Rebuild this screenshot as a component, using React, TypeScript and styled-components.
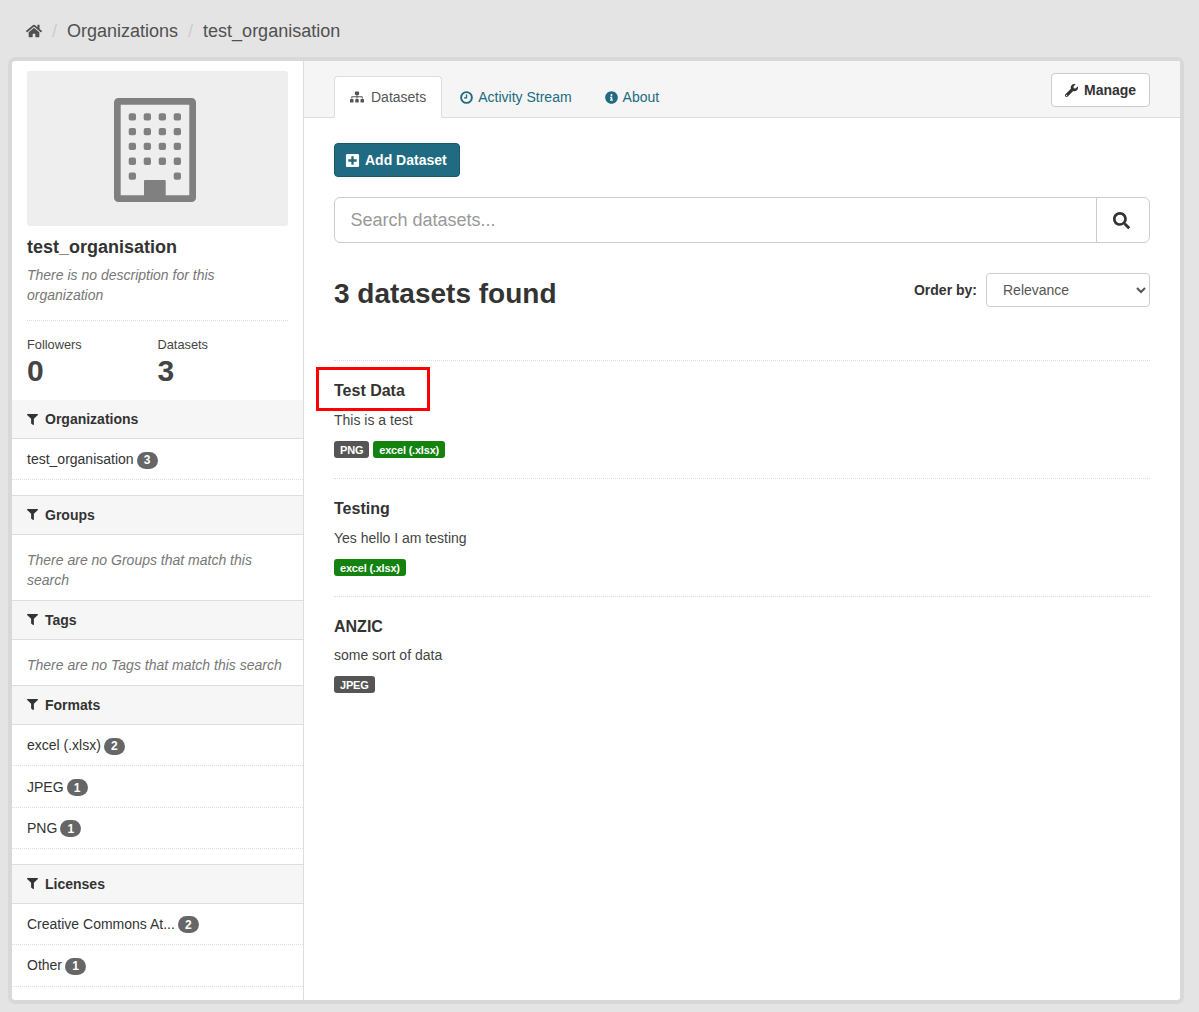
import React from 'react';
import {
  FaFilter,
  FaHome,
  FaInfoCircle,
  FaPlusSquare,
  FaSearch,
  FaSitemap,
  FaWrench,
} from 'react-icons/fa';
import styled, { createGlobalStyle } from 'styled-components';

const GlobalStyle = createGlobalStyle`
  html, body {
    margin: 0;
    padding: 0;
  }

  body {
    background: #e4e4e4;
    color: #444;
    font-family: "Liberation Sans", Arial, sans-serif;
    font-size: 14px;
    line-height: 20px;
  }

  * {
    box-sizing: border-box;
  }
`;

const Page = styled.div`
  width: 1199px;
  height: 1012px;
  padding: 0 19px 0 12px;
  overflow: hidden;
`;

const Breadcrumb = styled.nav`
  display: flex;
  align-items: center;
  height: 61px;
  padding: 0 0 0 14px;
  font-size: 18px;
  color: #505050;
`;

const HomeIcon = styled(FaHome)`
  width: 16px;
  height: 16px;
  color: #505050;
`;

const Slash = styled.span`
  color: #ccc;
  margin: 0 10px;
`;

const Wrapper = styled.div`
  display: flex;
  height: 939px;
  background: #fff;
  border-radius: 3px;
  box-shadow: 0 0 0 4px rgba(0, 0, 0, 0.05);
`;

const Sidebar = styled.aside`
  flex: 0 0 292px;
  border-right: 1px solid #ddd;
`;

const OrgInfo = styled.div`
  padding: 10px 15px 0;
`;

const OrgImage = styled.div`
  display: flex;
  align-items: center;
  justify-content: center;
  height: 155px;
  padding: 2px 5px 0 0;
  background: #eee;
  border-radius: 3px;
`;

const OrgName = styled.h1`
  margin: 10px 0 0;
  font-size: 18px;
  line-height: 22px;
  font-weight: bold;
  color: #333;
`;

const OrgDescription = styled.p`
  margin: 7px 0 0;
  height: 56px;
  font-style: italic;
  color: #777;
  border-bottom: 1px dotted #ddd;
`;

const Stats = styled.div`
  display: flex;
  height: 79px;
  padding-top: 15px;
`;

const Stat = styled.div`
  flex: 0 0 130.5px;
`;

const StatLabel = styled.div`
  font-size: 12.8px;
  line-height: 17px;
  color: #444;
`;

const StatValue = styled.div`
  font-size: 30px;
  line-height: 36px;
  font-weight: bold;
  color: #444;
`;

const FilterHeading = styled.h2<{ $topBorder?: boolean }>`
  display: flex;
  align-items: center;
  gap: 7px;
  margin: 0;
  height: ${(p) => (p.$topBorder ? 40 : 39)}px;
  padding: 0 15px;
  background: #f6f6f6;
  font-size: 14px;
  font-weight: bold;
  color: #333;
  border-bottom: 1px solid #ddd;
  border-top: ${(p) => (p.$topBorder ? '1px solid #ddd' : 'none')};
`;

const FilterIcon = styled(FaFilter)`
  width: 11px;
  height: 11px;
  color: #333;
`;

const FilterList = styled.ul`
  list-style: none;
  margin: 0 0 14.6px;
  padding: 0;
`;

const FilterItem = styled.li`
  display: flex;
  align-items: center;
  height: 41.4px;
  padding: 0 15px;
  border-bottom: 1px dotted #ddd;
  color: #333;
`;

const Count = styled.span`
  display: inline-flex;
  align-items: center;
  justify-content: center;
  width: 21px;
  height: 17px;
  margin: 2px 0 0 3px;
  border-radius: 9px;
  background: #666;
  color: #fff;
  font-size: 12px;
  font-weight: bold;
`;

const Empty = styled.p`
  margin: 0;
  padding: 15px 15px 10px;
  font-style: italic;
  color: #777;
`;

const Main = styled.main`
  flex: 1;
`;

const TabBar = styled.div`
  display: flex;
  justify-content: space-between;
  height: 57px;
  padding: 12px 30px 0 30px;
  background: #f5f5f5;
  border-bottom: 1px solid #ddd;
`;

const Tabs = styled.div`
  display: flex;
  align-items: flex-end;
  gap: 2px;
  height: 44px;
`;

const Tab = styled.a<{ $active?: boolean }>`
  display: flex;
  align-items: center;
  gap: ${(p) => (p.$active ? 7 : 5)}px;
  height: 42px;
  margin-bottom: -1px;
  padding: 0 ${(p) => (p.$active ? 15 : 14)}px 0 15px;
  border: 1px solid ${(p) => (p.$active ? '#ddd' : 'transparent')};
  border-bottom-color: ${(p) => (p.$active ? '#fff' : 'transparent')};
  border-radius: 4px 4px 0 0;
  background: ${(p) => (p.$active ? '#fff' : 'transparent')};
  color: ${(p) => (p.$active ? '#555' : '#206b82')};
`;

const InfoIcon = styled(FaInfoCircle)`
  width: 13px;
  height: 13px;
`;

const ManageButton = styled.button`
  display: flex;
  align-items: center;
  gap: 6px;
  width: 99px;
  height: 34px;
  padding: 0 0 0 13px;
  border: 1px solid #ccc;
  border-radius: 4px;
  background: #fff;
  color: #333;
  font: bold 14px "Liberation Sans", Arial, sans-serif;
`;

const Content = styled.div`
  padding: 25px 30px 0;
`;

const AddButton = styled.button`
  display: flex;
  align-items: center;
  gap: 5px;
  width: 126px;
  height: 34px;
  padding: 0 0 0 10px;
  border: 1px solid #1a5568;
  border-radius: 4px;
  background: #206b82;
  color: #fff;
  font: bold 14px "Liberation Sans", Arial, sans-serif;
`;

const SearchGroup = styled.div`
  display: flex;
  height: 46px;
  margin-top: 20px;
  border: 1px solid #ccc;
  border-radius: 6px;
`;

const SearchInput = styled.input`
  flex: 1;
  min-width: 0;
  padding: 0 16px 0 15.5px;
  border: 0;
  outline: 0;
  background: transparent;
  font: 18px "Liberation Sans", Arial, sans-serif;
  color: #555;

  &::placeholder {
    color: #999;
    opacity: 1;
  }
`;

const SearchButton = styled.button`
  display: flex;
  align-items: center;
  justify-content: center;
  flex: 0 0 53px;
  padding: 0 4px 0 0;
  border: 0;
  border-left: 1px solid #ccc;
  background: transparent;
  color: #333;
`;

const ResultHead = styled.div`
  display: flex;
  justify-content: space-between;
  align-items: flex-start;
  height: 118px;
  padding-top: 30px;
  border-bottom: 1px dotted #ddd;
`;

const ResultCount = styled.h2`
  margin: 1px 0 0;
  font-size: 28px;
  line-height: 40px;
  font-weight: bold;
  color: #333;
`;

const OrderBy = styled.div`
  display: flex;
  align-items: center;
  gap: 9px;
  font-weight: bold;
  color: #333;
`;

const OrderSelect = styled.select`
  width: 164px;
  height: 34px;
  padding: 0 12px;
  border: 1px solid #ccc;
  border-radius: 4px;
  background: #fff;
  color: #555;
  font: 14px "Liberation Sans", Arial, sans-serif;
`;

const Dataset = styled.article<{ $last?: boolean }>`
  position: relative;
  height: 118px;
  padding-top: 19px;
  border-bottom: ${(p) => (p.$last ? 'none' : '1px dotted #ddd')};
`;

const DatasetTitle = styled.h3`
  margin: 0;
  height: 21px;
  font-size: 16px;
  line-height: 21px;
  font-weight: bold;
  color: #333;
`;

const DatasetNotes = styled.p<{ $gap: number }>`
  margin: ${(p) => p.$gap}px 0 0;
  color: #444;
`;

const Labels = styled.div`
  display: flex;
  gap: 4px;
  margin-top: 11px;
`;

const FormatLabel = styled.span<{ $color: string }>`
  display: flex;
  align-items: center;
  height: 17px;
  padding: 0 6px;
  border-radius: 3px;
  background: ${(p) => p.$color};
  color: #fff;
  font-size: 11px;
  font-weight: bold;
  letter-spacing: -0.2px;
`;

const Highlight = styled.div`
  position: absolute;
  top: 6px;
  left: -18px;
  width: 114px;
  height: 44px;
  border: 3px solid #f00;
  pointer-events: none;
`;

const BuildingIcon = () => (
  <svg width="82" height="104" viewBox="0 0 82 104">
    <rect x="3.35" y="3.35" width="75.3" height="97.3" rx="1" fill="none" stroke="#808080" strokeWidth="6.7" />
    {[0, 1, 2, 3].map((row) =>
      [0, 1, 2, 3].map((col) => (
        <rect key={`${row}-${col}`} x={14.7 + col * 15} y={15.2 + row * 14.8} width="7.3" height="7.3" rx="2" fill="#808080" />
      ))
    )}
    <rect x="14.7" y="74.4" width="7.3" height="7.3" rx="2" fill="#808080" />
    <rect x="59.7" y="74.4" width="7.3" height="7.3" rx="2" fill="#808080" />
    <rect x="30" y="82" width="21.7" height="20" rx="1" fill="#808080" />
  </svg>
);

const ClockIcon = () => (
  <svg width="13" height="13" viewBox="0 0 13 13">
    <circle cx="6.5" cy="6.5" r="5.4" fill="none" stroke="currentColor" strokeWidth="1.9" />
    <path d="M6.5 3.4V6.9H4" fill="none" stroke="currentColor" strokeWidth="1.3" />
  </svg>
);

const Facet: React.FC<{ title: string; top?: boolean; items: [string, number][] }> = ({ title, top, items }) => (
  <>
    <FilterHeading $topBorder={top}>
      <FilterIcon />
      {title}
    </FilterHeading>
    <FilterList>
      {items.map(([name, count]) => (
        <FilterItem key={name}>
          {name}
          <Count>{count}</Count>
        </FilterItem>
      ))}
    </FilterList>
  </>
);

const EmptyFacet: React.FC<{ title: string; text: string }> = ({ title, text }) => (
  <>
    <FilterHeading $topBorder>
      <FilterIcon />
      {title}
    </FilterHeading>
    <Empty>{text}</Empty>
  </>
);

export default function App() {
  return (
    <Page>
      <GlobalStyle />
      <Breadcrumb>
        <HomeIcon />
        <Slash>/</Slash>
        Organizations
        <Slash>/</Slash>
        test_organisation
      </Breadcrumb>
      <Wrapper>
        <Sidebar>
          <OrgInfo>
            <OrgImage>
              <BuildingIcon />
            </OrgImage>
            <OrgName>test_organisation</OrgName>
            <OrgDescription>There is no description for this organization</OrgDescription>
            <Stats>
              <Stat>
                <StatLabel>Followers</StatLabel>
                <StatValue>0</StatValue>
              </Stat>
              <Stat>
                <StatLabel>Datasets</StatLabel>
                <StatValue>3</StatValue>
              </Stat>
            </Stats>
          </OrgInfo>
          <Facet title="Organizations" items={[['test_organisation', 3]]} />
          <EmptyFacet title="Groups" text="There are no Groups that match this search" />
          <EmptyFacet title="Tags" text="There are no Tags that match this search" />
          <Facet title="Formats" top items={[['excel (.xlsx)', 2], ['JPEG', 1], ['PNG', 1]]} />
          <Facet title="Licenses" top items={[['Creative Commons At...', 2], ['Other', 1]]} />
        </Sidebar>
        <Main>
          <TabBar>
            <Tabs>
              <Tab $active>
                <FaSitemap size={14} />
                Datasets
              </Tab>
              <Tab>
                <ClockIcon />
                Activity Stream
              </Tab>
              <Tab>
                <InfoIcon />
                About
              </Tab>
            </Tabs>
            <ManageButton>
              <FaWrench size={13} />
              Manage
            </ManageButton>
          </TabBar>
          <Content>
            <AddButton>
              <FaPlusSquare size={15} />
              Add Dataset
            </AddButton>
            <SearchGroup>
              <SearchInput placeholder="Search datasets..." />
              <SearchButton aria-label="Search">
                <FaSearch size={17} />
              </SearchButton>
            </SearchGroup>
            <ResultHead>
              <ResultCount>3 datasets found</ResultCount>
              <OrderBy>
                Order by:
                <OrderSelect defaultValue="Relevance">
                  <option>Relevance</option>
                </OrderSelect>
              </OrderBy>
            </ResultHead>
            <Dataset>
              <Highlight />
              <DatasetTitle>Test Data</DatasetTitle>
              <DatasetNotes $gap={9}>This is a test</DatasetNotes>
              <Labels>
                <FormatLabel $color="#555">PNG</FormatLabel>
                <FormatLabel $color="#14820f">excel (.xlsx)</FormatLabel>
              </Labels>
            </Dataset>
            <Dataset>
              <DatasetTitle>Testing</DatasetTitle>
              <DatasetNotes $gap={9}>Yes hello I am testing</DatasetNotes>
              <Labels>
                <FormatLabel $color="#14820f">excel (.xlsx)</FormatLabel>
              </Labels>
            </Dataset>
            <Dataset $last>
              <DatasetTitle>ANZIC</DatasetTitle>
              <DatasetNotes $gap={8}>some sort of data</DatasetNotes>
              <Labels>
                <FormatLabel $color="#555">JPEG</FormatLabel>
              </Labels>
            </Dataset>
          </Content>
        </Main>
      </Wrapper>
    </Page>
  );
}
